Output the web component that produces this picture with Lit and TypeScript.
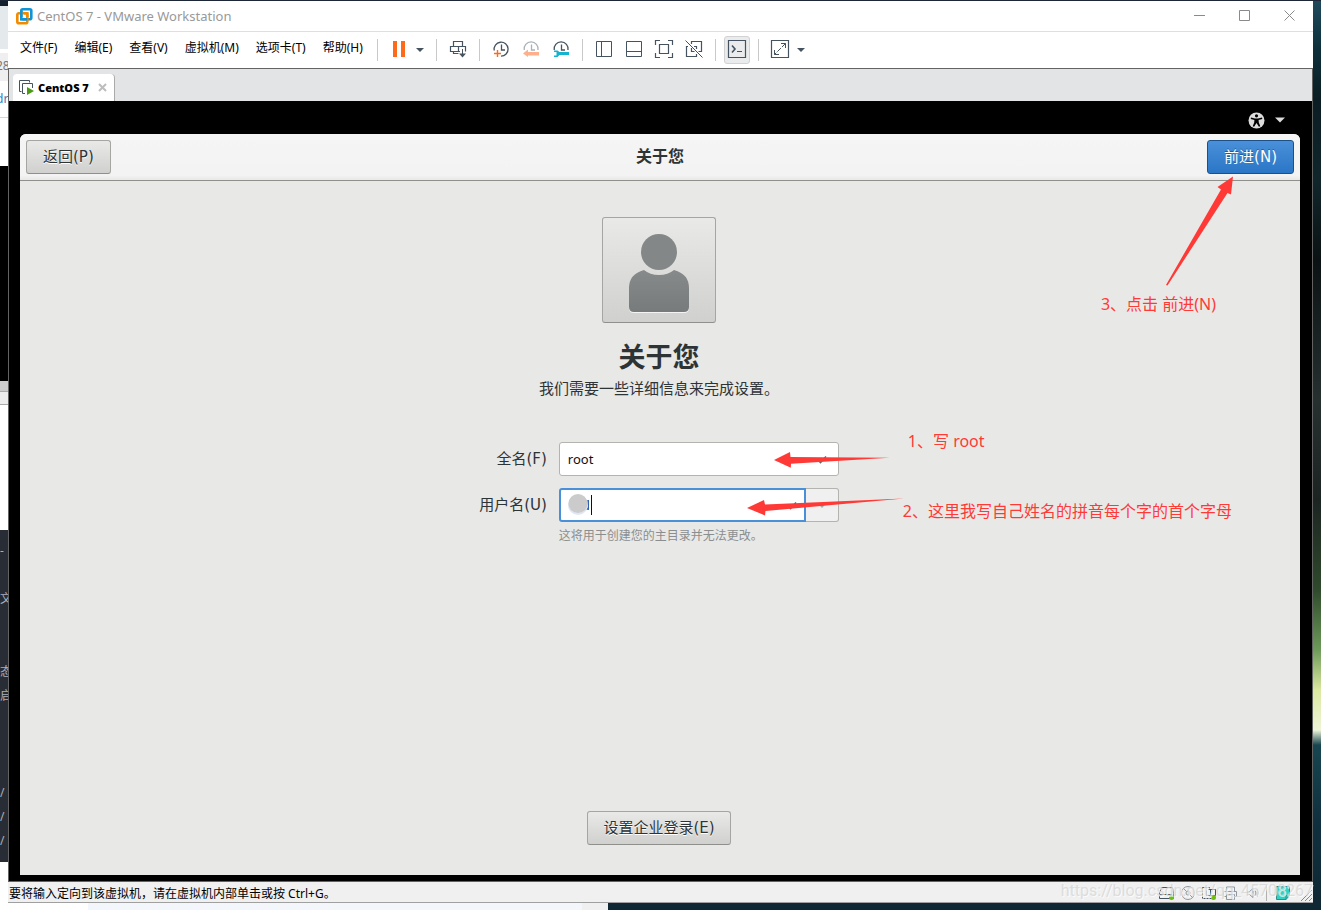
import { LitElement, html, css, svg } from "lit";
import { customElement } from "lit/decorators.js";

const caret = html`<svg class="caret" width="12" height="24" viewBox="0 0 12 24" aria-hidden="true"><path d="M2 10h8l-4 4z" fill="#44535f" /></svg>`;

const icon = (body: unknown) =>
  html`<svg width="24" height="24" viewBox="0 0 24 24" fill="none" stroke="#44535f" stroke-width="1" aria-hidden="true">${body}</svg>`;

const pause = svg`<path d="M6 3h4v16H6zM14 3h4v16h-4z" fill="#ff6a1a" stroke="none"/>`;
const send = svg`<path d="M7.5 8V3.500h9V8M14 13.500H4.500v-5h15v5M12.500 8.500v5M7.500 13.500v2h5" stroke-width="1.200"/><path d="M16.500 11v6"/><path d="M13 15.500h7l-3.500 4z" fill="#44535f" stroke="none"/>`;
const snapshot = svg`<path d="M5.200 12.500A7 7 0 1 1 12 18.200M12.500 6.500v5.500H16" stroke-width="1.300"/><path d="M8.500 12v7M5 15.500h7" stroke="#ff6a1a" stroke-width="1.400"/>`;
const revert = svg`<path d="M5.200 12A7 7 0 1 1 19 12M12.500 6.500v5.500H16" stroke="#a9b1b8" stroke-width="1.300"/><path d="M4 15.500l5-4v2.500h11v3.500H9v1.500z" fill="#ffb08a" stroke="none"/>`;
const manage = svg`<path d="M5.200 12A7 7 0 1 1 19 12M12.500 6.500v5.500H16" stroke-width="1.300"/><path d="M5 12.500h3.500l2 1.500H20v3h-9.500l-2 2H5v-1.500h2.500v-3.500H5z" fill="#12b4d0" stroke="none"/>`;
const library = svg`<path d="M4.500 3.500h15v15h-15zM9.500 3.500v15"/>`;
const thumbs = svg`<path d="M4.500 3.500h15v15h-15zM4.500 13.500h15"/>`;
const full = svg`<path d="M3.500 7V2.500H8M16 2.500h4.500V7M20.500 15v4.500H16M8 19.500H3.500V15M7.500 6.500h9v9h-9z" stroke-width="1.200"/>`;
const unity = svg`<path d="M9.500 6V3.500h10v10h-3M12 8.500h2.500V11M6 8.500H4.500v10h10V16M9.500 10v3.500h3" stroke-width="1.200"/><path d="M3.500 2.500l17 17"/>`;
const terminal = svg`<path d="M3.500 2.500h17v17h-17zM12 13.500h5" stroke-width="1.200"/><path d="M7 7.500l3 3.500-3 3.500" stroke-width="1.600"/>`;
const stretch = svg`<path d="M3.500 2.500h17v17h-17z" stroke-width="1.200"/><path d="M13 5.500h4.500V10M11 16.500H6.500V12"/><path d="M17.500 5.500l-11 11" stroke-dasharray="5 1.500"/>`;

const menus = ["文件(F)", "编辑(E)", "查看(V)", "虚拟机(M)", "选项卡(T)", "帮助(H)"];

const groups = [
  [{ name: "发送按键", art: send }],
  [
    { name: "拍摄快照", art: snapshot },
    { name: "恢复快照", art: revert },
    { name: "管理快照", art: manage },
  ],
  [
    { name: "库", art: library },
    { name: "缩略图", art: thumbs },
    { name: "全屏", art: full },
    { name: "Unity", art: unity },
  ],
  [{ name: "控制台", art: terminal, on: true }],
  [{ name: "拉伸", art: stretch }],
];

@customElement("vm-toolbar")
export class VmToolbar extends LitElement {
  static styles = css`
    :host {
      display: flex;
      align-items: center;
      height: 36px;
      padding-left: 4px;
      background: #fff;
      border-bottom: 1px solid #636363;
    }
    button {
      font: inherit;
      color: inherit;
      background: none;
      border: 0;
      padding: 0;
      display: grid;
      place-items: center;
    }
    .menu { height: 28px; padding: 0 8px; margin-bottom: 4px; white-space: nowrap; }
    .menus { display: flex; gap: 1px; }
    .sep { width: 1px; height: 22px; margin: 0 6px; background: #c9c9c9; flex: none; }
    .tool { width: 30px; height: 30px; flex: none; }
    .drop { width: 16px; height: 30px; flex: none; justify-items: start; }
    .on { width: 26px; height: 28px; margin: 0 2px; background: #e9ebec; border: 1px solid #d2d2d2; border-radius: 3px; }
  `;

  render() {
    return html`
      <nav class="menus">${menus.map((m) => html`<button class="menu">${m}</button>`)}</nav>
      <span class="sep"></span>
      <button class="tool" aria-label="暂停">${icon(pause)}</button>
      <button class="drop" aria-label="电源选项">${caret}</button>
      ${groups.map(
        (g) => html`<span class="sep"></span>${g.map(
            (t: any) => html`<button class="tool ${t.on ? "on" : ""}" aria-label=${t.name}>${icon(t.art)}</button>`
          )}`
      )}
      <button class="drop" aria-label="拉伸选项">${caret}</button>
    `;
  }
}

@customElement("guest-setup")
export class GuestSetup extends LitElement {
  static styles = css`
    :host {
      position: relative;
      flex: 1;
      display: flex;
      flex-direction: column;
      background: #e8e8e7;
      border-radius: 6px 6px 0 0;
      color: #2e3436;
      font: 15px/20px "DejaVu Sans", "Noto Sans CJK SC", sans-serif;
    }
    header {
      display: grid;
      grid-template-columns: 1fr auto 1fr;
      align-items: center;
      height: 46px;
      padding: 0 6px;
      border-radius: 6px 6px 0 0;
      background: linear-gradient(#f5f5f5, #f3f3f3 90%, #e8e8e8);
      border-bottom: 1px solid #8f8f8b;
    }
    .title { font-size: 16px; font-weight: 700; margin: 0; line-height: 20px; }
    .btn {
      font: inherit;
      color: #2e3436;
      height: 34px;
      padding: 0 15px;
      border: 1px solid #a5a5a1;
      border-bottom-color: #8f8f8b;
      border-radius: 3px;
      background: linear-gradient(#e9e9e8, #d0d0ce);
      text-shadow: 0 1px #fff;
      white-space: nowrap;
    }
    header .btn { padding: 0 16px; }
    .back { justify-self: start; }
    .next {
      justify-self: end;
      color: #fff;
      background: linear-gradient(#4a90d9, #2a76c6);
      border-color: #1c5187;
      text-shadow: 0 -1px #1f5c9c;
    }
    main { flex: 1; display: flex; flex-direction: column; align-items: center; padding: 36px 26px 30px 24px; }
    .avatar {
      box-sizing: border-box;
      width: 114px;
      height: 106px;
      padding: 6px 0 0;
      border: 1px solid #a5a5a1;
      border-bottom-color: #8f8f8b;
      border-radius: 3px;
      background: linear-gradient(#e9e9e8, #d0d0ce);
      display: grid;
      place-items: center;
    }
    h1 { margin: 17px 0 0; font-size: 27px; line-height: 36px; }
    .lead { margin: 3px 0 0; line-height: 20px; }
    form { position: relative; display: grid; grid-template-columns: auto 280px; column-gap: 12px; margin-top: 43px; align-items: center; }
    label { text-align: right; }
    .field { position: relative; display: flex; height: 34px; }
    .second { margin-top: 12px; }
    input {
      box-sizing: border-box;
      flex: 1;
      min-width: 0;
      border: 1px solid #b3b3af;
      border-radius: 3px;
      background: #fff;
      padding: 0 8px;
      font: 13px "Noto Sans", sans-serif;
      color: #111;
      outline: 0;
    }
    .active { border: 2px solid #4a90d9; border-radius: 3px 0 0 3px; padding-left: 21px; }
    .more { width: 33px; border: 1px solid #b3b3af; border-left: 0; border-radius: 0 3px 3px 0; background: #f0f0f0; padding: 0; }
    .check { position: absolute; right: 11px; top: 12px; }
    .check.inner { right: 41px; }
    .mask { position: absolute; left: 9px; top: 6px; }
    .hint { grid-column: 2; margin: 4px 0 0; font-size: 12px; line-height: 20px; color: #8b8e8f; }
    .enterprise { margin-top: auto; }
    .note { position: absolute; white-space: nowrap; color: #ff3a36; font: 16px/24px "Noto Sans", "Noto Sans CJK SC", sans-serif; pointer-events: none; }
    .arrows { position: absolute; left: calc(100% - 99px); top: 0; pointer-events: none; }
    .n1 { left: calc(100% + 69px); top: -13px; }
    .n2 { left: calc(100% + 64px); top: 57px; }
    .n3 { right: 84px; top: 158px; }
    .arrow3 { position: absolute; right: 60px; top: 40px; pointer-events: none; }
  `;

  render() {
    return html`
      <header>
        <button class="btn back">返回(P)</button>
        <h2 class="title">关于您</h2>
        <button class="btn next">前进(N)</button>
      </header>
      <main>
        <button class="avatar" aria-label="头像">
          <svg width="64" height="80" viewBox="0 0 64 80" aria-hidden="true">
            <defs>
              <linearGradient id="g" x2="0" y2="1"><stop stop-color="#868a8a" /><stop offset="1" stop-color="#777b7b" /></linearGradient>
            </defs>
            <path d="M17 38Q2 42 2 56v19q0 5 5 5h50q5 0 5-5V56Q62 42 47 38q-6 5-15 5T17 38z" fill="#f4f4f4" />
            <path d="M17 37Q2 41 2 55v19q0 5 5 5h50q5 0 5-5V55Q62 41 47 37q-6 5-15 5T17 37z" fill="url(#g)" />
            <circle cx="32" cy="19" r="18" fill="#838787" />
          </svg>
        </button>
        <h1>关于您</h1>
        <p class="lead">我们需要一些详细信息来完成设置。</p>
        <form>
          <label for="full">全名(F)</label>
          <div class="field">
            <input id="full" .value=${"root"} />
            <svg class="check" width="12" height="11" viewBox="0 0 12 11" aria-hidden="true"><path d="M2 6l2.500 2.500L10 2.500" fill="none" stroke="#666" stroke-width="1.600" /></svg>
          </div>
          <label class="second" for="user">用户名(U)</label>
          <div class="field second">
            <input id="user" class="active" .value=${"d"} />
            <svg class="mask" width="26" height="24" viewBox="0 0 26 24" aria-hidden="true">
              <circle cx="10" cy="11" r="10" fill="#dfe6f4" /><circle cx="10" cy="9.500" r="9.500" fill="#cbcbcb" /><path d="M23.500 1v20" stroke="#111" />
            </svg>
            <svg class="check inner" width="12" height="11" viewBox="0 0 12 11" aria-hidden="true"><path d="M2 6l2.500 2.500L10 2.500" fill="none" stroke="#666" stroke-width="1.600" /></svg>
            <button class="more" type="button" aria-label="更多用户名">
              <svg width="10" height="6" viewBox="0 0 10 6" aria-hidden="true"><path d="M2 1h6l-3 3z" fill="#aaa" /></svg>
            </button>
          </div>
          <p class="hint">这将用于创建您的主目录并无法更改。</p>
          <svg class="arrows" width="170" height="80" viewBox="740 442 170 80" fill="#ff3a36" aria-hidden="true">
            <path d="M774 460l16-8 .5 5 99 .7-98.500 6 -.2 4z" />
            <path d="M747 508l17-8 1 4.500 139-6-138.500 12.500-.5 4.500z" />
          </svg>
          <span class="note n1">1、写 root</span>
          <span class="note n2">2、这里我写自己姓名的拼音每个字的首个字母</span>
        </form>
        <button class="btn enterprise">设置企业登录(E)</button>
      </main>
      <svg class="arrow3" width="80" height="116" viewBox="1160 174 80 116" fill="#ff3a36" aria-hidden="true">
        <path d="M1233 176.500l-15.500 10.500 3.500 2.500L1166 285l1.500.5L1227.500 193l3.500 1.500z" />
      </svg>
      <span class="note n3">3、点击 前进(N)</span>
    `;
  }
}

@customElement("app-root")
export class AppRoot extends LitElement {
  static styles = css`
    :host {
      position: relative;
      display: flex;
      box-sizing: border-box;
      min-height: 100vh;
      padding: 1px 8px 7px;
      overflow: hidden;
      color: #000;
      font: 12px/16px "Noto Sans", "Noto Sans CJK SC", sans-serif;
      background: linear-gradient(#1f4a5c, #0d2f3a 50px, #0a1d22 100px, #10262b 180px, #0b1213 260px, #26302f 400px, #1c2422 500px, #2f4a2c 590px, #6d9a5a 650px, #dbe8a0 690px, #eef5d8 730px, #174650 745px, #10303f 820px, #0f2733);
    }
    button { font: inherit; border: 0; background: none; padding: 0; display: grid; place-items: center; }
    .behind {
      position: absolute;
      left: 0;
      top: 0;
      bottom: 0;
      width: 8px;
      color: #a9b0bd;
      background: linear-gradient(#14202c 6px, #e4e9ec 6px 49px, #fff 49px 53px, #efefef 53px 81px, #fff 81px 117px, #d6d6d6 117px 118px, #fff 118px 166px, #000 166px 381px, #ccc 381px 391px, #aaa 391px 392px, #ededed 392px 404px, #aaa 404px 405px, #fff 405px 530px, #282c34 530px 862px, #fff 862px);
    }
    .behind span { position: absolute; left: 0; white-space: nowrap; }
    .behind .cut { left: -4px; }
    .below { position: absolute; left: 0; bottom: 0; width: 608px; height: 7px; background: linear-gradient(90deg, #fff 88px, #f3f6fb 88px 582px, #f0f0f0 582px); }
    .top { position: absolute; left: 0; right: 0; top: 0; height: 1px; background: #1d2636; }
    .window { position: relative; flex: 1; display: flex; flex-direction: column; min-width: 0; background: #fff; }
    .titlebar { display: flex; align-items: center; height: 30px; padding: 0 1px 0 8px; border-bottom: 1px solid #dfdfdf; color: #999; }
    .titlebar .name { flex: 1; padding-left: 4px; font-size: 13px; }
    .ctl { box-sizing: border-box; width: 45px; height: 30px; padding-bottom: 2px; }
    .body { flex: 1; display: flex; flex-direction: column; border: solid #636363; border-width: 0 1px 1px; background: #000; }
    .tabs { display: flex; align-items: flex-end; height: 32px; padding-left: 4px; background: #e3e4e6; }
    .tab { display: flex; align-items: center; height: 27px; padding: 0 7px 0 6px; background: #fff; border-right: 1px solid #aaa; border-radius: 4px 4px 0 0; font-weight: 700; font-size: 11px; }
    .tab b { padding: 0 9px 0 4px; }
    .panel { display: flex; justify-content: flex-end; align-items: center; gap: 10px; height: 33px; padding: 5px 27px 0 0; box-sizing: border-box; }
    .screen { flex: 1; display: flex; padding: 0 12px 6px 11px; }
    .status { position: relative; display: flex; align-items: center; height: 20px; padding-left: 1px; background: #f0f0f0; border-bottom: 1px solid #a0a0a0; }
    .status .msg { flex: 1; padding-top: 4px; }
    .status svg { flex: none; margin-top: 2px; }
    .mark { position: absolute; right: 0; top: -1px; font: 16px/20px Roboto, sans-serif; color: rgba(214, 214, 214, 0.8); text-shadow: 1px 1px rgba(255, 255, 255, 0.7); }
  `;

  render() {
    return html`
      <div class="behind" aria-hidden="true">
        <span class="cut" style="top:58px;color:#777">28</span><span class="cut" style="top:91px;color:#3b7cb8">dr</span>
        <span style="top:543px">-</span><span style="top:591px">文</span><span style="top:664px">态</span><span style="top:688px">启</span>
        <span style="top:785px">/</span><span style="top:809px">/</span><span style="top:833px">/</span>
      </div>
      <div class="below"></div>
      <div class="top"></div>
      <div class="window">
        <div class="titlebar">
          <svg width="17" height="17" viewBox="0 0 17 17" fill="none" stroke-width="2.600" aria-hidden="true">
            <rect x="5.300" y="1.300" width="10" height="10" rx="1.500" stroke="#0f95d7" />
            <rect x="1.300" y="5.300" width="10" height="10" rx="1.500" stroke="#f38b00" />
            <path d="M5.300 9V2.800" stroke="#0f95d7" />
            <path d="M4 11.300h7.300" stroke="#0f95d7" />
            <path d="M11.300 9V5.300H8" stroke="#f38b00" />
          </svg>
          <span class="name">CentOS 7 - VMware Workstation</span>
          <button class="ctl" aria-label="最小化"><svg width="11" height="11" stroke="#8a8a8a"><path d="M0 5.500h11" /></svg></button>
          <button class="ctl" aria-label="最大化"><svg width="11" height="11" stroke="#8a8a8a" fill="none"><path d="M.5.5h10v10H.5z" /></svg></button>
          <button class="ctl" aria-label="关闭"><svg width="11" height="11" stroke="#8a8a8a"><path d="M.5.5l10 10M10.500.5l-10 10" /></svg></button>
        </div>
        <vm-toolbar></vm-toolbar>
        <div class="body">
          <div class="tabs">
            <div class="tab">
              <svg width="15" height="15" viewBox="0 0 15 15" fill="none" stroke="#44535f" aria-hidden="true">
                <path d="M2.500 11.500H.5V.5h10v2M6 13.500H3.500v-10h10V8" /><path d="M8 7l7 4-7 4z" fill="#4a9a14" stroke="none" />
              </svg>
              <b>CentOS 7</b>
              <button aria-label="关闭标签"><svg width="9" height="9" stroke="#bdbdbd" stroke-width="2"><path d="M1 1l7 7M8 1L1 8" /></svg></button>
            </div>
          </div>
          <div class="panel">
            <svg width="17" height="17" viewBox="0 0 17 17" aria-hidden="true">
              <circle cx="8.500" cy="8.500" r="8" fill="#dcdcdc" /><circle cx="8.500" cy="3.800" r="1.600" />
              <path d="M3 5.600l4 .9h3l4-.9.3 1.300-3.700 1.200.2 2.400 1.500 3.700-1.400.6L8.500 11l-2.400 3.800-1.400-.6 1.500-3.700.2-2.400L2.700 6.900z" />
            </svg>
            <svg width="10" height="6" viewBox="0 0 10 6" aria-hidden="true"><path d="M0 .5h10L5 5.500z" fill="#dcdcdc" /></svg>
          </div>
          <div class="screen"><guest-setup></guest-setup></div>
        </div>
        <div class="status">
          <span class="msg">要将输入定向到该虚拟机，请在虚拟机内部单击或按 Ctrl+G。</span>
          <svg width="156" height="18" viewBox="1157 884 156 18" fill="none" stroke="#8d979f" aria-hidden="true">
            <g stroke="#44535f"><path d="M1161.500 887.500h11l1 6v5h-14v-5zM1160 894.500h12" /><path d="M1202.500 887.500h7v2M1202.500 887.500v11h10" stroke-dasharray="2 1" /><path d="M1206.500 890.500v5h4M1208.500 889.500h7v6h-5v-6" /></g>
            <circle cx="1188" cy="893" r="6.500" /><circle cx="1188" cy="893" r="2" /><path d="M1184 889l2.500 2.500M1190 895l2.500 2.500" />
            <path d="M1226.500 891v-4h8v4M1226 896.500h-2.500v-5h13v5h-2M1226.500 894.500h8v5h-8z" />
            <path d="M1247.500 891.500h2l3.500-3v9l-3.500-3h-2zM1255 890.500q2 2.500 0 5M1257 889q3 4 0 8" />
            <path d="M1266.500 885v16" stroke="#b0b0b0" />
            <path d="M1276.500 886.500h13v9l-3.500 4h-9.500z" fill="#2fd3c4" stroke="#2b8f8c" /><path d="M1286 899.500v-4h3.500" stroke="#2b8f8c" />
            <circle cx="1171.500" cy="897.500" r="2.500" fill="#6abf12" stroke="none" /><circle cx="1213.500" cy="897.500" r="2.500" fill="#6abf12" stroke="none" />
            <path d="M1301 901l11-11M1305 901l7-7M1309 901l3-3" stroke="#888" />
          </svg>
          <span class="mark">https://blog.csdn.net/qq_45708267</span>
        </div>
      </div>
    `;
  }
}
